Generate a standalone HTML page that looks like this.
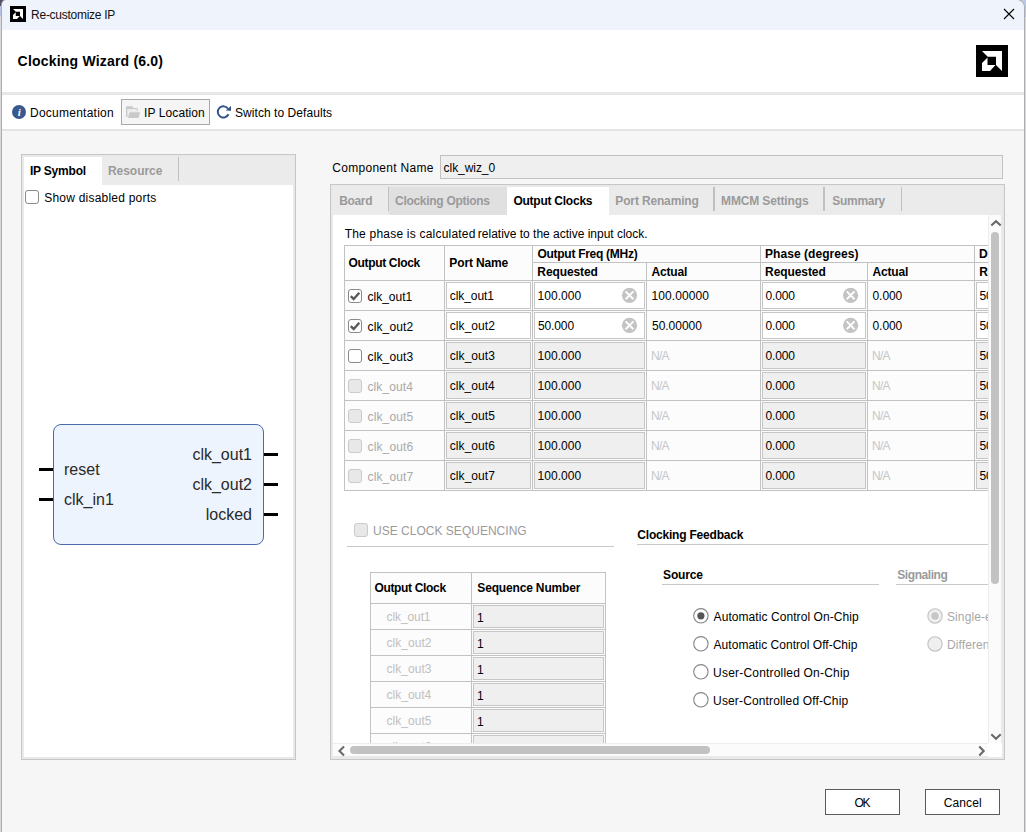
<!DOCTYPE html><html><head><meta charset="utf-8"><title>Re-customize IP</title><style>
*{box-sizing:border-box;margin:0;padding:0}
html,body{width:1026px;height:832px;overflow:hidden}
body{position:relative;background:#f6f6f6;font-family:"Liberation Sans",sans-serif;font-size:12px;color:#000}
.a{position:absolute}
.t{position:absolute;white-space:nowrap;line-height:14px;height:14px}
.b{font-weight:bold}
.g{color:#9a9a9a}
.dis{color:#a9a9a9}
.na{color:#c6c6c8}
.cell{position:absolute;background:#fcfcfc}
.inp{position:absolute;border:1px solid #c6c6c6;background:#fff}
.inp.d{background:#efefef}
.cb{position:absolute;width:14px;height:14px;border:1px solid #8a8a8a;border-radius:3px;background:#fff}
.cb.d{border-color:#cbcbcb;background:#e8e8e8}
.rad{position:absolute;width:15px;height:15px;border:1px solid #8a8a8a;border-radius:50%;background:#fff}
.rad.d{border-color:#d2d2d2;background:#efefef}
.hl{position:absolute;height:1px;background:#c8c8c8}
.vl{position:absolute;width:1px;background:#c0c0c0}
</style></head><body>
<div class="a" style="left:0px;top:0px;width:1026px;height:832px;background:#d9d9dc"></div>
<div class="a" style="left:1018px;top:0px;width:8px;height:17px;background:#b9c8e6"></div>
<div class="a" style="left:0px;top:0px;width:6px;height:16px;background:#b4c3e2"></div>
<div class="a" style="left:0px;top:0px;width:4px;height:6px;background:#54506a"></div>
<div class="a" style="left:2px;top:0px;width:1022px;height:840px;background:#f6f6f6;border-radius:5px 8px 0 0;overflow:hidden;box-shadow:0 0 0 1px #adadad"><div class="a" style="left:0;top:0;width:1023px;height:30px;background:#eff3fb"></div><div class="a" style="left:0;top:30px;width:1023px;height:62px;background:#fff"></div><div class="a" style="left:0;top:92px;width:1023px;height:3px;background:#e7e7e7"></div><div class="a" style="left:0;top:95px;width:1023px;height:34px;background:#fff"></div><div class="a" style="left:0;top:129px;width:1023px;height:2px;background:#e4e4e4"></div></div>
<svg class="a" style="left:10px;top:6px" width="16" height="16" viewBox="0 0 32 32"><rect width="32" height="32" fill="#000"/><path d="M6 6H26V26L20 20V11.7H11.7Z" fill="#fff"/><path d="M6 18L11.5 12.5V20H19.5L14 26H6Z" fill="#fff"/></svg>
<div class="t " style="left:31.1px;top:8px;letter-spacing:-0.271px;color:#111">Re-customize IP</div>
<svg class="a" style="left:1002px;top:7px" width="14" height="14" viewBox="0 0 14 14"><path d="M2 2L12 12M12 2L2 12" stroke="#000" stroke-width="1.1" fill="none"/></svg>
<div class="t b" style="left:17.6px;top:55px;letter-spacing:0.198px;font-size:14px;line-height:16px;height:16px;margin-top:-2px">Clocking Wizard (6.0)</div>
<svg class="a" style="left:976px;top:45px" width="32" height="32" viewBox="0 0 32 32"><rect width="32" height="32" fill="#000"/><path d="M6 6H26V26L20 20V11.7H11.7Z" fill="#fff"/><path d="M6 18L11.5 12.5V20H19.5L14 26H6Z" fill="#fff"/></svg>
<svg class="a" style="left:12px;top:105px" width="14" height="14" viewBox="0 0 14 14"><circle cx="7" cy="7" r="7" fill="#3b5790"/><text x="7.2" y="11" font-family="Liberation Serif,serif" font-size="11" font-weight="bold" font-style="italic" fill="#fff" text-anchor="middle">i</text></svg>
<div class="t " style="left:30.0px;top:106px;letter-spacing:0.25px;">Documentation</div>
<div class="a" style="left:121px;top:99px;width:89px;height:26px;border:1px solid #a8a8a8;background:#f5f5f5"></div>
<svg class="a" style="left:126px;top:106px" width="15" height="12" viewBox="0 0 15 12"><path d="M0 1Q0 0.2 0.8 0.2H6.2Q7 0.2 7 1V1.9H11Q11.8 1.9 11.8 2.7V5.2H10.7V3.3H1.6V11H0Z" fill="#c9c9c9"/><path d="M1.6 3.3H10.7V6.3H3.5L1.6 11Z" fill="#ececec"/><path d="M3.5 6.3H14.1L12.6 11.9H1.9Z" fill="#c9c9c9"/></svg>
<div class="t " style="left:144.1px;top:106px;letter-spacing:0.08px;">IP Location</div>
<svg class="a" style="left:216px;top:104px" width="16" height="16" viewBox="0 0 16 16"><path d="M12.48 10.27A5.6 5.6 0 1 1 11.99 4.69" stroke="#30508a" stroke-width="1.9" fill="none"/><path d="M15 2V6.8L9.8 6.6Z" fill="#30508a"/></svg>
<div class="t " style="left:235.0px;top:106px;letter-spacing:0.059px;">Switch to Defaults</div>
<div class="a" style="left:21px;top:154px;width:275px;height:606px;border:1px solid #c6c6c6;background:#e9e9e9"></div>
<div class="a" style="left:24px;top:157px;width:269px;height:600px;background:#fff"></div>
<div class="a" style="left:24px;top:157px;width:269px;height:28px;background:#ebebeb"></div>
<div class="a" style="left:24px;top:157px;width:78px;height:28px;background:#fff"></div>
<div class="t b" style="left:29.95px;top:164px;letter-spacing:-0.194px;">IP Symbol</div>
<div class="t b g" style="left:107.95px;top:164px;letter-spacing:-0.029px;">Resource</div>
<div class="vl" style="left:178px;top:157px;width:1px;height:24px;"></div>
<div class="cb" style="left:25px;top:190px;width:14px;height:14px;"></div>
<div class="t " style="left:44.2px;top:191px;letter-spacing:0.219px;">Show disabled ports</div>
<div class="a" style="left:53px;top:424px;width:211px;height:121px;border:1px solid #4a6aa8;border-radius:8px;background:#edf4fd"></div>
<div class="a" style="left:39px;top:468px;width:14px;height:3px;background:#000"></div>
<div class="a" style="left:39px;top:498px;width:14px;height:3px;background:#000"></div>
<div class="a" style="left:264px;top:453px;width:14px;height:3px;background:#000"></div>
<div class="a" style="left:264px;top:483px;width:14px;height:3px;background:#000"></div>
<div class="a" style="left:264px;top:513px;width:14px;height:3px;background:#000"></div>
<div class="t" style="left:64px;top:461px;font-size:16px;line-height:18px;height:18px;color:#2a2a2a">reset</div>
<div class="t" style="left:64px;top:491px;font-size:16px;line-height:18px;height:18px;color:#2a2a2a">clk_in1</div>
<div class="t" style="right:774px;top:446px;font-size:16px;line-height:18px;height:18px;color:#2a2a2a">clk_out1</div>
<div class="t" style="right:774px;top:476px;font-size:16px;line-height:18px;height:18px;color:#2a2a2a">clk_out2</div>
<div class="t" style="right:774px;top:506px;font-size:16px;line-height:18px;height:18px;color:#2a2a2a">locked</div>
<div class="t " style="left:332.3px;top:161px;letter-spacing:0.285px;">Component Name</div>
<div class="a" style="left:440px;top:155px;width:563px;height:24px;border:1px solid #c2c2c2;background:#efefef"></div>
<div class="t " style="left:443.6px;top:161px;letter-spacing:-0.056px;">clk_wiz_0</div>
<div class="a" style="left:330px;top:184px;width:675px;height:576px;border:1px solid #c6c6c6;background:#e9e9e9"></div>
<div class="a" style="left:333px;top:187px;width:669px;height:28px;background:#ebebeb"></div>
<div class="a" style="left:389px;top:187px;width:118px;height:28px;background:#e0e0e0"></div>
<div class="a" style="left:507px;top:187px;width:102px;height:28px;background:#fff"></div>
<div class="vl" style="left:388px;top:187px;width:1px;height:24px;"></div>
<div class="vl" style="left:713px;top:187px;width:2px;height:24px;"></div>
<div class="vl" style="left:823px;top:187px;width:2px;height:24px;"></div>
<div class="vl" style="left:901px;top:187px;width:1px;height:24px;"></div>
<div class="t b g" style="left:339.15px;top:194px;letter-spacing:-0.337px;">Board</div>
<div class="t b g" style="left:395.0px;top:194px;letter-spacing:-0.287px;">Clocking Options</div>
<div class="t b" style="left:513.4px;top:194px;letter-spacing:-0.242px;">Output Clocks</div>
<div class="t b g" style="left:615.35px;top:194px;letter-spacing:-0.154px;">Port Renaming</div>
<div class="t b g" style="left:721.05px;top:194px;letter-spacing:-0.15px;">MMCM Settings</div>
<div class="t b g" style="left:832.3px;top:194px;letter-spacing:-0.283px;">Summary</div>
<div class="a" style="left:333px;top:215px;width:655px;height:528px;background:#fff;overflow:hidden">
<div class="t " style="left:11.65px;top:12px;letter-spacing:0.214px;">The phase is calculated</div>
<div class="t " style="left:144.85px;top:12px;letter-spacing:-0.01px;">relative to the active input clock.</div>
<div class="a" style="left:11px;top:30px;width:760px;height:246px;background:#c2c2c2"></div>
<div class="cell" style="left:12px;top:31px;width:99px;height:34px;"></div>
<div class="cell" style="left:112px;top:31px;width:87px;height:34px;"></div>
<div class="cell" style="left:200px;top:31px;width:227px;height:16px;"></div>
<div class="cell" style="left:200px;top:48px;width:113px;height:17px;"></div>
<div class="cell" style="left:314px;top:48px;width:113px;height:17px;"></div>
<div class="cell" style="left:428px;top:31px;width:213px;height:16px;"></div>
<div class="cell" style="left:428px;top:48px;width:106px;height:17px;"></div>
<div class="cell" style="left:535px;top:48px;width:106px;height:17px;"></div>
<div class="cell" style="left:642px;top:31px;width:113px;height:16px;"></div>
<div class="cell" style="left:642px;top:48px;width:113px;height:17px;"></div>
<div class="t b" style="left:15.5px;top:41px;letter-spacing:-0.332px;">Output Clock</div>
<div class="t b" style="left:116.35px;top:41px;letter-spacing:-0.138px;">Port Name</div>
<div class="t b" style="left:204.5px;top:32px;letter-spacing:-0.281px;">Output Freq (MHz)</div>
<div class="t b" style="left:204.35px;top:50px;letter-spacing:-0.106px;">Requested</div>
<div class="t b" style="left:318.55px;top:50px;letter-spacing:-0.18px;">Actual</div>
<div class="t b" style="left:432.05px;top:32px;letter-spacing:0.05px;">Phase (degrees)</div>
<div class="t b" style="left:432.05px;top:50px;letter-spacing:-0.081px;">Requested</div>
<div class="t b" style="left:539.55px;top:50px;letter-spacing:-0.2px;">Actual</div>
<div class="t b" style="left:646px;top:32px;letter-spacing:-0.4px;">Duty Cycle (%)</div>
<div class="t b" style="left:646.15px;top:50px;letter-spacing:-0.106px;">Requested</div>
<div class="cell" style="left:12px;top:66px;width:99px;height:29px;"></div>
<div class="cell" style="left:112px;top:66px;width:87px;height:29px;"></div>
<div class="cell" style="left:200px;top:66px;width:113px;height:29px;"></div>
<div class="cell" style="left:314px;top:66px;width:113px;height:29px;"></div>
<div class="cell" style="left:428px;top:66px;width:106px;height:29px;"></div>
<div class="cell" style="left:535px;top:66px;width:106px;height:29px;"></div>
<div class="cell" style="left:642px;top:66px;width:113px;height:29px;"></div>
<div class="cb" style="left:15px;top:74px;width:14px;height:14px;"><svg width="12" height="12" viewBox="0 0 12 12" style="position:absolute;left:0;top:0"><path d="M1.8 6.1L4.7 9L10.3 2.8" stroke="#5a5a5a" stroke-width="2.4" fill="none"/></svg></div>
<div class="t " style="left:34.5px;top:75px;letter-spacing:0.007px;">clk_out1</div>
<div class="inp" style="left:113px;top:67px;width:85px;height:27px;"></div>
<div class="t " style="left:116.75px;top:74px;letter-spacing:-0.071px;">clk_out1</div>
<div class="inp" style="left:201px;top:67px;width:111px;height:27px;"></div>
<div class="t " style="left:204.5px;top:74px;letter-spacing:0.042px;">100.000</div>
<div class="t " style="left:318.5px;top:74px;letter-spacing:0.094px;">100.00000</div>
<div class="inp" style="left:429px;top:67px;width:104px;height:27px;"></div>
<div class="t " style="left:432.6px;top:74px;letter-spacing:-0.15px;">0.000</div>
<div class="t " style="left:539.5px;top:74px;letter-spacing:-0.062px;">0.000</div>
<div class="inp" style="left:643px;top:67px;width:110px;height:27px;"></div>
<div class="t " style="left:646.5px;top:74px;letter-spacing:-0.13px;">50.000</div>
<svg class="a" style="left:286px;top:70px" width="20" height="20" viewBox="0 0 20 20"><circle cx="10.50" cy="10.35" r="7.6" fill="#c3c3c3"/><path d="M6.60 6.45L14.40 14.25M14.40 6.45L6.60 14.25" stroke="#fff" stroke-width="1.9" fill="none"/></svg>
<svg class="a" style="left:507px;top:70px" width="20" height="20" viewBox="0 0 20 20"><circle cx="10.60" cy="10.35" r="7.6" fill="#c3c3c3"/><path d="M6.70 6.45L14.50 14.25M14.50 6.45L6.70 14.25" stroke="#fff" stroke-width="1.9" fill="none"/></svg>
<div class="cell" style="left:12px;top:96px;width:99px;height:29px;"></div>
<div class="cell" style="left:112px;top:96px;width:87px;height:29px;"></div>
<div class="cell" style="left:200px;top:96px;width:113px;height:29px;"></div>
<div class="cell" style="left:314px;top:96px;width:113px;height:29px;"></div>
<div class="cell" style="left:428px;top:96px;width:106px;height:29px;"></div>
<div class="cell" style="left:535px;top:96px;width:106px;height:29px;"></div>
<div class="cell" style="left:642px;top:96px;width:113px;height:29px;"></div>
<div class="cb" style="left:15px;top:104px;width:14px;height:14px;"><svg width="12" height="12" viewBox="0 0 12 12" style="position:absolute;left:0;top:0"><path d="M1.8 6.1L4.7 9L10.3 2.8" stroke="#5a5a5a" stroke-width="2.4" fill="none"/></svg></div>
<div class="t " style="left:34.5px;top:105px;letter-spacing:0.136px;">clk_out2</div>
<div class="inp" style="left:113px;top:97px;width:85px;height:27px;"></div>
<div class="t " style="left:116.75px;top:104px;letter-spacing:0.071px;">clk_out2</div>
<div class="inp" style="left:201px;top:97px;width:111px;height:27px;"></div>
<div class="t " style="left:205.0px;top:104px;letter-spacing:-0.13px;">50.000</div>
<div class="t " style="left:319.0px;top:104px;letter-spacing:-0.021px;">50.00000</div>
<div class="inp" style="left:429px;top:97px;width:104px;height:27px;"></div>
<div class="t " style="left:432.6px;top:104px;letter-spacing:-0.15px;">0.000</div>
<div class="t " style="left:539.5px;top:104px;letter-spacing:-0.062px;">0.000</div>
<div class="inp" style="left:643px;top:97px;width:110px;height:27px;"></div>
<div class="t " style="left:646.5px;top:104px;letter-spacing:-0.13px;">50.000</div>
<svg class="a" style="left:286px;top:100px" width="20" height="20" viewBox="0 0 20 20"><circle cx="10.50" cy="10.35" r="7.6" fill="#c3c3c3"/><path d="M6.60 6.45L14.40 14.25M14.40 6.45L6.60 14.25" stroke="#fff" stroke-width="1.9" fill="none"/></svg>
<svg class="a" style="left:507px;top:100px" width="20" height="20" viewBox="0 0 20 20"><circle cx="10.60" cy="10.35" r="7.6" fill="#c3c3c3"/><path d="M6.70 6.45L14.50 14.25M14.50 6.45L6.70 14.25" stroke="#fff" stroke-width="1.9" fill="none"/></svg>
<div class="cell" style="left:12px;top:126px;width:99px;height:29px;"></div>
<div class="cell" style="left:112px;top:126px;width:87px;height:29px;"></div>
<div class="cell" style="left:200px;top:126px;width:113px;height:29px;"></div>
<div class="cell" style="left:314px;top:126px;width:113px;height:29px;"></div>
<div class="cell" style="left:428px;top:126px;width:106px;height:29px;"></div>
<div class="cell" style="left:535px;top:126px;width:106px;height:29px;"></div>
<div class="cell" style="left:642px;top:126px;width:113px;height:29px;"></div>
<div class="cb" style="left:15px;top:134px;width:14px;height:14px;"></div>
<div class="t " style="left:34.5px;top:135px;letter-spacing:0.136px;">clk_out3</div>
<div class="inp d" style="left:113px;top:127px;width:85px;height:27px;"></div>
<div class="t " style="left:116.75px;top:134px;letter-spacing:0.071px;">clk_out3</div>
<div class="inp d" style="left:201px;top:127px;width:111px;height:27px;"></div>
<div class="t " style="left:204.5px;top:134px;letter-spacing:0.042px;">100.000</div>
<div class="t na" style="left:318.0px;top:134px;letter-spacing:-0.75px;">N/A</div>
<div class="inp d" style="left:429px;top:127px;width:104px;height:27px;"></div>
<div class="t " style="left:432.6px;top:134px;letter-spacing:-0.15px;">0.000</div>
<div class="t na" style="left:539.0px;top:134px;letter-spacing:-0.75px;">N/A</div>
<div class="inp d" style="left:643px;top:127px;width:110px;height:27px;"></div>
<div class="t " style="left:646.5px;top:134px;letter-spacing:-0.13px;">50.000</div>
<div class="cell" style="left:12px;top:156px;width:99px;height:29px;"></div>
<div class="cell" style="left:112px;top:156px;width:87px;height:29px;"></div>
<div class="cell" style="left:200px;top:156px;width:113px;height:29px;"></div>
<div class="cell" style="left:314px;top:156px;width:113px;height:29px;"></div>
<div class="cell" style="left:428px;top:156px;width:106px;height:29px;"></div>
<div class="cell" style="left:535px;top:156px;width:106px;height:29px;"></div>
<div class="cell" style="left:642px;top:156px;width:113px;height:29px;"></div>
<div class="cb d" style="left:15px;top:164px;width:14px;height:14px;"></div>
<div class="t dis" style="left:34.5px;top:165px;letter-spacing:0.1px;">clk_out4</div>
<div class="inp d" style="left:113px;top:157px;width:85px;height:27px;"></div>
<div class="t " style="left:116.75px;top:164px;letter-spacing:0.036px;">clk_out4</div>
<div class="inp d" style="left:201px;top:157px;width:111px;height:27px;"></div>
<div class="t " style="left:204.5px;top:164px;letter-spacing:0.042px;">100.000</div>
<div class="t na" style="left:318.0px;top:164px;letter-spacing:-0.75px;">N/A</div>
<div class="inp d" style="left:429px;top:157px;width:104px;height:27px;"></div>
<div class="t " style="left:432.6px;top:164px;letter-spacing:-0.15px;">0.000</div>
<div class="t na" style="left:539.0px;top:164px;letter-spacing:-0.75px;">N/A</div>
<div class="inp d" style="left:643px;top:157px;width:110px;height:27px;"></div>
<div class="t " style="left:646.5px;top:164px;letter-spacing:-0.13px;">50.000</div>
<div class="cell" style="left:12px;top:186px;width:99px;height:29px;"></div>
<div class="cell" style="left:112px;top:186px;width:87px;height:29px;"></div>
<div class="cell" style="left:200px;top:186px;width:113px;height:29px;"></div>
<div class="cell" style="left:314px;top:186px;width:113px;height:29px;"></div>
<div class="cell" style="left:428px;top:186px;width:106px;height:29px;"></div>
<div class="cell" style="left:535px;top:186px;width:106px;height:29px;"></div>
<div class="cell" style="left:642px;top:186px;width:113px;height:29px;"></div>
<div class="cb d" style="left:15px;top:194px;width:14px;height:14px;"></div>
<div class="t dis" style="left:34.5px;top:195px;letter-spacing:0.136px;">clk_out5</div>
<div class="inp d" style="left:113px;top:187px;width:85px;height:27px;"></div>
<div class="t " style="left:116.75px;top:194px;letter-spacing:0.071px;">clk_out5</div>
<div class="inp d" style="left:201px;top:187px;width:111px;height:27px;"></div>
<div class="t " style="left:204.5px;top:194px;letter-spacing:0.042px;">100.000</div>
<div class="t na" style="left:318.0px;top:194px;letter-spacing:-0.75px;">N/A</div>
<div class="inp d" style="left:429px;top:187px;width:104px;height:27px;"></div>
<div class="t " style="left:432.6px;top:194px;letter-spacing:-0.15px;">0.000</div>
<div class="t na" style="left:539.0px;top:194px;letter-spacing:-0.75px;">N/A</div>
<div class="inp d" style="left:643px;top:187px;width:110px;height:27px;"></div>
<div class="t " style="left:646.5px;top:194px;letter-spacing:-0.13px;">50.000</div>
<div class="cell" style="left:12px;top:216px;width:99px;height:29px;"></div>
<div class="cell" style="left:112px;top:216px;width:87px;height:29px;"></div>
<div class="cell" style="left:200px;top:216px;width:113px;height:29px;"></div>
<div class="cell" style="left:314px;top:216px;width:113px;height:29px;"></div>
<div class="cell" style="left:428px;top:216px;width:106px;height:29px;"></div>
<div class="cell" style="left:535px;top:216px;width:106px;height:29px;"></div>
<div class="cell" style="left:642px;top:216px;width:113px;height:29px;"></div>
<div class="cb d" style="left:15px;top:224px;width:14px;height:14px;"></div>
<div class="t dis" style="left:34.5px;top:225px;letter-spacing:0.136px;">clk_out6</div>
<div class="inp d" style="left:113px;top:217px;width:85px;height:27px;"></div>
<div class="t " style="left:116.75px;top:224px;letter-spacing:0.071px;">clk_out6</div>
<div class="inp d" style="left:201px;top:217px;width:111px;height:27px;"></div>
<div class="t " style="left:204.5px;top:224px;letter-spacing:0.042px;">100.000</div>
<div class="t na" style="left:318.0px;top:224px;letter-spacing:-0.75px;">N/A</div>
<div class="inp d" style="left:429px;top:217px;width:104px;height:27px;"></div>
<div class="t " style="left:432.6px;top:224px;letter-spacing:-0.15px;">0.000</div>
<div class="t na" style="left:539.0px;top:224px;letter-spacing:-0.75px;">N/A</div>
<div class="inp d" style="left:643px;top:217px;width:110px;height:27px;"></div>
<div class="t " style="left:646.5px;top:224px;letter-spacing:-0.13px;">50.000</div>
<div class="cell" style="left:12px;top:246px;width:99px;height:29px;"></div>
<div class="cell" style="left:112px;top:246px;width:87px;height:29px;"></div>
<div class="cell" style="left:200px;top:246px;width:113px;height:29px;"></div>
<div class="cell" style="left:314px;top:246px;width:113px;height:29px;"></div>
<div class="cell" style="left:428px;top:246px;width:106px;height:29px;"></div>
<div class="cell" style="left:535px;top:246px;width:106px;height:29px;"></div>
<div class="cell" style="left:642px;top:246px;width:113px;height:29px;"></div>
<div class="cb d" style="left:15px;top:254px;width:14px;height:14px;"></div>
<div class="t dis" style="left:34.5px;top:255px;letter-spacing:0.136px;">clk_out7</div>
<div class="inp d" style="left:113px;top:247px;width:85px;height:27px;"></div>
<div class="t " style="left:116.75px;top:254px;letter-spacing:0.071px;">clk_out7</div>
<div class="inp d" style="left:201px;top:247px;width:111px;height:27px;"></div>
<div class="t " style="left:204.5px;top:254px;letter-spacing:0.042px;">100.000</div>
<div class="t na" style="left:318.0px;top:254px;letter-spacing:-0.75px;">N/A</div>
<div class="inp d" style="left:429px;top:247px;width:104px;height:27px;"></div>
<div class="t " style="left:432.6px;top:254px;letter-spacing:-0.15px;">0.000</div>
<div class="t na" style="left:539.0px;top:254px;letter-spacing:-0.75px;">N/A</div>
<div class="inp d" style="left:643px;top:247px;width:110px;height:27px;"></div>
<div class="t " style="left:646.5px;top:254px;letter-spacing:-0.13px;">50.000</div>
<div class="cb d" style="left:21px;top:308px;width:14px;height:14px;"></div>
<div class="t g" style="left:40.0px;top:309px;letter-spacing:0.016px;">USE CLOCK SEQUENCING</div>
<div class="hl" style="left:14px;top:331px;width:267px;height:1px;"></div>
<div class="a" style="left:37px;top:357px;width:236px;height:300px;background:#c2c2c2"></div>
<div class="cell" style="left:38px;top:358px;width:100px;height:30px;"></div>
<div class="cell" style="left:139px;top:358px;width:133px;height:30px;"></div>
<div class="t b" style="left:41.4px;top:366px;letter-spacing:-0.332px;">Output Clock</div>
<div class="t b" style="left:144.3px;top:366px;letter-spacing:-0.161px;">Sequence Number</div>
<div class="cell" style="left:38px;top:389px;width:100px;height:25px;"></div>
<div class="cell" style="left:139px;top:389px;width:133px;height:25px;"></div>
<div class="t dis" style="left:53.6px;top:395px;letter-spacing:-0.107px;color:#c0c0c0">clk_out1</div>
<div class="inp d" style="left:140px;top:390px;width:131px;height:23px;"></div>
<div class="t " style="left:144px;top:396px;">1</div>
<div class="cell" style="left:38px;top:415px;width:100px;height:25px;"></div>
<div class="cell" style="left:139px;top:415px;width:133px;height:25px;"></div>
<div class="t dis" style="left:53.6px;top:421px;letter-spacing:0.021px;color:#c0c0c0">clk_out2</div>
<div class="inp d" style="left:140px;top:416px;width:131px;height:23px;"></div>
<div class="t " style="left:144px;top:422px;">1</div>
<div class="cell" style="left:38px;top:441px;width:100px;height:25px;"></div>
<div class="cell" style="left:139px;top:441px;width:133px;height:25px;"></div>
<div class="t dis" style="left:53.6px;top:447px;letter-spacing:0.021px;color:#c0c0c0">clk_out3</div>
<div class="inp d" style="left:140px;top:442px;width:131px;height:23px;"></div>
<div class="t " style="left:144px;top:448px;">1</div>
<div class="cell" style="left:38px;top:467px;width:100px;height:25px;"></div>
<div class="cell" style="left:139px;top:467px;width:133px;height:25px;"></div>
<div class="t dis" style="left:53.6px;top:473px;letter-spacing:-0.014px;color:#c0c0c0">clk_out4</div>
<div class="inp d" style="left:140px;top:468px;width:131px;height:23px;"></div>
<div class="t " style="left:144px;top:474px;">1</div>
<div class="cell" style="left:38px;top:493px;width:100px;height:25px;"></div>
<div class="cell" style="left:139px;top:493px;width:133px;height:25px;"></div>
<div class="t dis" style="left:53.6px;top:499px;letter-spacing:0.021px;color:#c0c0c0">clk_out5</div>
<div class="inp d" style="left:140px;top:494px;width:131px;height:23px;"></div>
<div class="t " style="left:144px;top:500px;">1</div>
<div class="cell" style="left:38px;top:519px;width:100px;height:25px;"></div>
<div class="cell" style="left:139px;top:519px;width:133px;height:25px;"></div>
<div class="t dis" style="left:53.6px;top:525px;letter-spacing:0.021px;color:#c0c0c0">clk_out6</div>
<div class="inp d" style="left:140px;top:520px;width:131px;height:23px;"></div>
<div class="t " style="left:144px;top:526px;">1</div>
<div class="cell" style="left:38px;top:545px;width:100px;height:25px;"></div>
<div class="cell" style="left:139px;top:545px;width:133px;height:25px;"></div>
<div class="t dis" style="left:53.6px;top:551px;letter-spacing:0.021px;color:#c0c0c0">clk_out7</div>
<div class="inp d" style="left:140px;top:546px;width:131px;height:23px;"></div>
<div class="t " style="left:144px;top:552px;">1</div>
<div class="t b" style="left:304.3px;top:313px;letter-spacing:-0.203px;">Clocking Feedback</div>
<div class="hl" style="left:304px;top:329px;width:400px;height:1px;"></div>
<div class="t b" style="left:330.1px;top:353px;letter-spacing:-0.17px;">Source</div>
<div class="hl" style="left:329px;top:369px;width:217px;height:1px;"></div>
<div class="t b g" style="left:564.3px;top:353px;letter-spacing:-0.444px;">Signaling</div>
<div class="hl" style="left:563px;top:369px;width:150px;height:1px;"></div>
<svg class="a" style="left:357px;top:390px" width="20" height="20" viewBox="0 0 20 20"><circle cx="10.90" cy="10.80" r="7.2" fill="#fff" stroke="#858585" stroke-width="1.1"/><circle cx="10.90" cy="10.80" r="3.6" fill="#555"/></svg>
<div class="t " style="left:380.6px;top:395px;letter-spacing:0.069px;">Automatic Control On-Chip</div>
<svg class="a" style="left:357px;top:418px" width="20" height="20" viewBox="0 0 20 20"><circle cx="10.90" cy="10.80" r="7.2" fill="#fff" stroke="#858585" stroke-width="1.1"/></svg>
<div class="t " style="left:380.6px;top:423px;letter-spacing:0.026px;">Automatic Control Off-Chip</div>
<svg class="a" style="left:357px;top:446px" width="20" height="20" viewBox="0 0 20 20"><circle cx="10.90" cy="10.80" r="7.2" fill="#fff" stroke="#858585" stroke-width="1.1"/></svg>
<div class="t " style="left:380.1px;top:451px;letter-spacing:0.195px;">User-Controlled On-Chip</div>
<svg class="a" style="left:357px;top:474px" width="20" height="20" viewBox="0 0 20 20"><circle cx="10.90" cy="10.80" r="7.2" fill="#fff" stroke="#858585" stroke-width="1.1"/></svg>
<div class="t " style="left:380.1px;top:479px;letter-spacing:0.141px;">User-Controlled Off-Chip</div>
<svg class="a" style="left:592px;top:390px" width="20" height="20" viewBox="0 0 20 20"><circle cx="10.00" cy="10.90" r="7.2" fill="#efefef" stroke="#c2c2c2" stroke-width="1.1"/><circle cx="10.00" cy="10.90" r="3.6" fill="#c6c6c6"/></svg>
<div class="t g" style="left:614px;top:395px;letter-spacing:0.1px;color:#a8a8a8">Single-ended clock capable pin</div>
<svg class="a" style="left:592px;top:418px" width="20" height="20" viewBox="0 0 20 20"><circle cx="10.00" cy="10.90" r="7.2" fill="#efefef" stroke="#c2c2c2" stroke-width="1.1"/></svg>
<div class="t g" style="left:614px;top:423px;letter-spacing:0.1px;color:#a8a8a8">Differential clock capable pin</div>
</div>
<div class="a" style="left:988px;top:215px;width:13px;height:528px;background:#fbfbfb;border-left:1px solid #ededed"></div>
<div class="a" style="left:333px;top:743px;width:655px;height:13px;background:#fbfbfb;border-top:1px solid #ededed"></div>
<div class="a" style="left:988px;top:743px;width:14px;height:14px;background:#fff"></div>
<div class="a" style="left:991px;top:232px;width:8px;height:352px;background:#c2c2c2;border-radius:4px"></div>
<div class="a" style="left:350px;top:746px;width:360px;height:8px;background:#c2c2c2;border-radius:4px"></div>
<svg class="a" style="left:990px;top:219px" width="12" height="8" viewBox="0 0 12 8"><path d="M1.3 6.5L6 2.2L10.7 6.5" stroke="#686868" stroke-width="2.1" fill="none"/></svg>
<svg class="a" style="left:990px;top:733px" width="12" height="8" viewBox="0 0 12 8"><path d="M1.3 1.3L6 5.7L10.7 1.3" stroke="#686868" stroke-width="2.1" fill="none"/></svg>
<svg class="a" style="left:337px;top:745px" width="8" height="12" viewBox="0 0 8 12"><path d="M7 1.6L2.5 6L7 10.4" stroke="#686868" stroke-width="2.1" fill="none"/></svg>
<svg class="a" style="left:978px;top:745px" width="8" height="12" viewBox="0 0 8 12"><path d="M1.3 1.5L5.7 6L1.3 10.5" stroke="#686868" stroke-width="2.1" fill="none"/></svg>
<div class="a" style="left:825px;top:789px;width:75px;height:26px;border:1px solid #5a5a5a;background:#fff"></div>
<div class="t " style="left:854.4px;top:796px;letter-spacing:-1.15px;">OK</div>
<div class="a" style="left:925px;top:789px;width:75px;height:26px;border:1px solid #5a5a5a;background:#fff"></div>
<div class="t " style="left:943.7px;top:796px;letter-spacing:0.12px;">Cancel</div>
</body></html>
